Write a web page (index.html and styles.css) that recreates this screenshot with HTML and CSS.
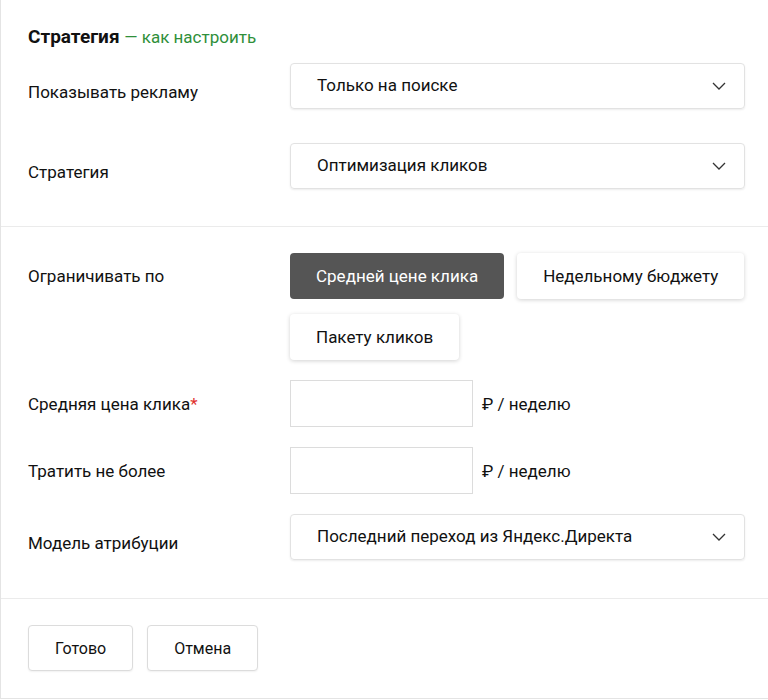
FILE: index.html
```html
<!DOCTYPE html>
<html lang="ru">
<head>
  <meta charset="UTF-8">
  <title>Стратегия</title>
  <link rel="stylesheet" href="styles.css">
</head>
<body>
  <div class="panel">
    <div class="section top">
      <h2 class="title">Стратегия <a href="#" class="help">— как настроить</a></h2>

      <div class="row first">
        <div class="label low">Показывать рекламу</div>
        <div class="select">
          <span>Только на поиске</span>
          <svg class="chevron" width="14" height="8" viewBox="0 0 14 8"><path d="M1 1l6 6 6-6" fill="none" stroke="#333" stroke-width="1.3"/></svg>
        </div>
      </div>

      <div class="row">
        <div class="label low">Стратегия</div>
        <div class="select">
          <span>Оптимизация кликов</span>
          <svg class="chevron" width="14" height="8" viewBox="0 0 14 8"><path d="M1 1l6 6 6-6" fill="none" stroke="#333" stroke-width="1.3"/></svg>
        </div>
      </div>
    </div>

    <div class="section middle">
      <div class="row limit">
        <div class="label tall">Ограничивать по</div>
        <div class="toggles">
          <div class="toggle-line">
            <button type="button" class="toggle active">Средней цене клика</button>
            <button type="button" class="toggle">Недельному бюджету</button>
          </div>
          <div class="toggle-line">
            <button type="button" class="toggle">Пакету кликов</button>
          </div>
        </div>
      </div>

      <div class="row">
        <div class="label">Средняя цена клика<span class="req">*</span></div>
        <input type="text" class="amount">
        <span class="unit">₽ / неделю</span>
      </div>

      <div class="row">
        <div class="label">Тратить не более</div>
        <input type="text" class="amount">
        <span class="unit">₽ / неделю</span>
      </div>

      <div class="row">
        <div class="label low">Модель атрибуции</div>
        <div class="select">
          <span>Последний переход из Яндекс.Директа</span>
          <svg class="chevron" width="14" height="8" viewBox="0 0 14 8"><path d="M1 1l6 6 6-6" fill="none" stroke="#333" stroke-width="1.3"/></svg>
        </div>
      </div>
    </div>

    <div class="section actions">
      <button type="button" class="btn">Готово</button>
      <button type="button" class="btn">Отмена</button>
    </div>
  </div>
</body>
</html>
```

FILE: styles.css
```css
body {
  margin: 0;
  font-family: Roboto, "Noto Sans", sans-serif;
  font-size: 17px;
  color: #111;
  background: #fff;
}

.panel {
  border-left: 1px solid #e4e4e4;
  border-bottom: 1px solid #e4e4e4;
  height: 699px;
  box-sizing: border-box;
  width: 800px;
}

.section {
  padding: 26px 0 0 27px;
  border-bottom: 1px solid #ebebeb;
  box-sizing: border-box;
}

.top {
  height: 227px;
}

.middle {
  height: 372px;
  display: flex;
  flex-direction: column;
  gap: 20px;
}

.actions {
  border-bottom: none;
  display: flex;
  gap: 14px;
}

.title {
  margin: 0 0 15px;
  font-size: 19px;
  line-height: 22px;
  font-weight: bold;
  color: #111;
}

.help {
  color: #2f8f3a;
  font-weight: normal;
  font-size: 17px;
  text-decoration: none;
}

.row {
  display: flex;
  align-items: center;
}

.top .row + .row {
  margin-top: 34px;
}

.limit {
  align-items: flex-start;
}

.label {
  width: 262px;
  flex: none;
}

.label.low {
  padding-top: 12px;
}

.label.tall {
  line-height: 46px;
}

.req {
  color: #e0312d;
}

.select {
  width: 455px;
  height: 46px;
  box-sizing: border-box;
  border: 1px solid #e2e2e2;
  border-radius: 4px;
  box-shadow: 0 1px 2px rgba(0,0,0,0.08);
  padding: 0 18px 0 26px;
  display: flex;
  align-items: center;
  justify-content: space-between;
}

.select span {
  margin-top: -2px;
}

.toggles {
  display: flex;
  flex-direction: column;
  gap: 15px;
}

.toggle-line {
  display: flex;
  gap: 13px;
}

.toggle {
  font: inherit;
  height: 46px;
  padding: 0 26px;
  border: none;
  border-radius: 4px;
  background: #fff;
  color: #111;
  box-shadow: 0 1px 4px rgba(0,0,0,0.18);
  cursor: pointer;
}

.toggle.active {
  background: #555;
  color: #fff;
  box-shadow: none;
}

.amount {
  width: 183px;
  height: 47px;
  box-sizing: border-box;
  border: 1px solid #dcdcdc;
  margin: 0;
  font: inherit;
}

.unit {
  margin-left: 9px;
}

.btn {
  font: inherit;
  font-size: 16px;
  height: 46px;
  padding: 0 26px;
  background: #fff;
  color: #111;
  border: 1px solid #dcdcdc;
  border-radius: 4px;
  box-shadow: 0 1px 2px rgba(0,0,0,0.06);
  cursor: pointer;
}
```
